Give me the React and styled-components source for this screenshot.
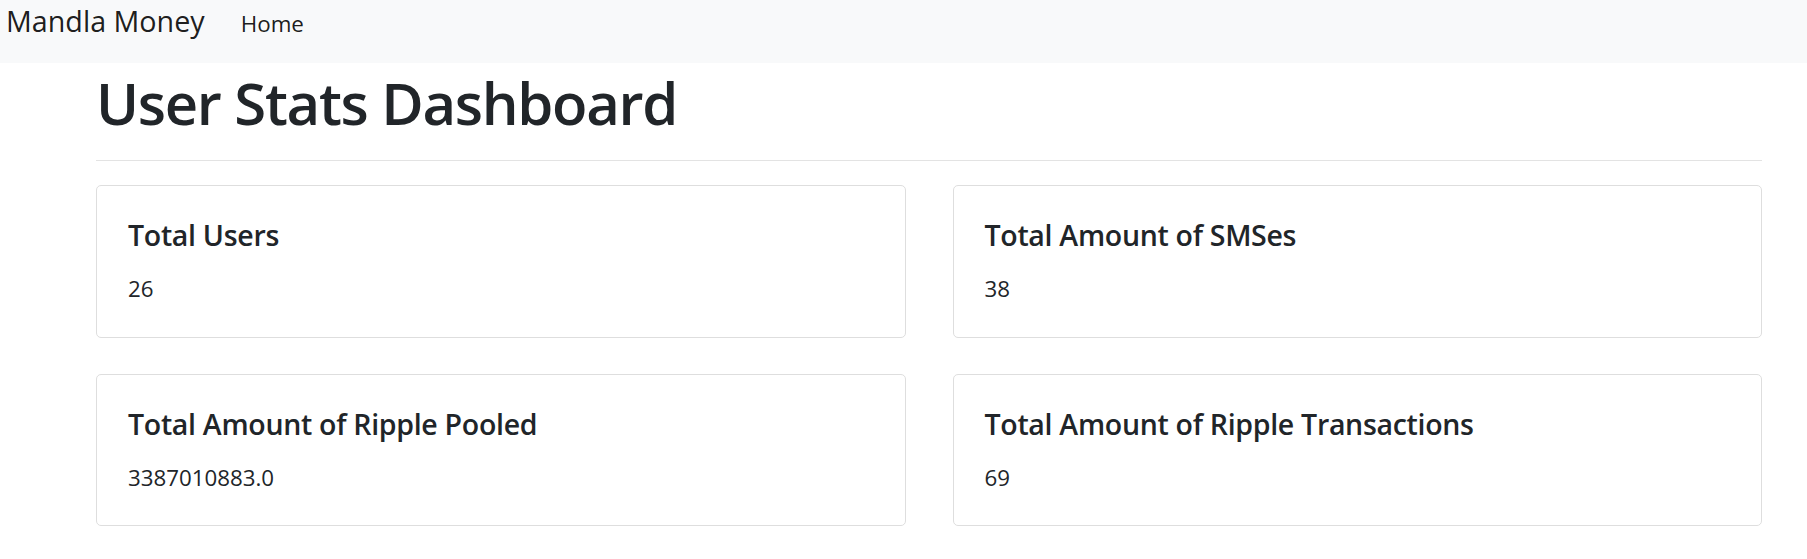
import React from 'react';
import styled, { createGlobalStyle } from 'styled-components';

const GlobalStyle = createGlobalStyle`
    body {
        margin: 0;
        background: #fff;
        color: #212529;
        font-family: "Open Sans", "Noto Sans", sans-serif;
    }
`;

const Nav = styled.nav`
    display: flex;
    align-items: baseline;
    height: 63px;
    padding: 7px 6px 0 6px;
    background-color: #f8f9fa;
    box-sizing: border-box;
`;
const Brand = styled.a`
    font-size: 28.7px;
    color: rgba(0, 0, 0, 0.9);
    text-decoration: none;
    margin-right: 36px;
    line-height: 1;
`;
const NavLink = styled.a`
    font-size: 22.4px;
    color: rgba(0, 0, 0, 0.9);
    text-decoration: none;
    line-height: 1;
`;
const Container = styled.main`
    margin: 0 45px 0 96px;
`;
const Title = styled.h1`
    margin: 5px 0 0 0;
    font-size: 58px;
    font-weight: 600;
    line-height: 1.2;
    letter-spacing: -1.3px;
`;
const Hr = styled.hr`
    margin: 22.5px 0 24px 0;
    border: 0;
    border-top: 1px solid #e3e3e3;
`;
const Grid = styled.div`
    display: grid;
    grid-template-columns: 1fr 1fr;
    column-gap: 47px;
    row-gap: 36px;
`;
const Card = styled.div`
    border: 1px solid #dedede;
    border-radius: 5px;
    padding: 32px 31px 31px 31px;
`;
const CardTitle = styled.h5`
    margin: 0 0 20px 0;
    font-size: 28.5px;
    font-weight: 600;
    line-height: 1.2;
    letter-spacing: -0.3px;
`;
const CardText = styled.p`
    margin: 0;
    font-size: 22.3px;
    line-height: 1.5;
`;

const stats = [
    { label: 'Total Users', value: '26' },
    { label: 'Total Amount of SMSes', value: '38' },
    { label: 'Total Amount of Ripple Pooled', value: '3387010883.0' },
    { label: 'Total Amount of Ripple Transactions', value: '69' },
];

const App = () => (
    <>
        <GlobalStyle />
        <Nav>
            <Brand href="#">Mandla Money</Brand>
            <NavLink href="#">Home</NavLink>
        </Nav>
        <Container>
            <Title>User Stats Dashboard</Title>
            <Hr />
            <Grid>
                {stats.map(s => (
                    <Card key={s.label}>
                        <CardTitle>{s.label}</CardTitle>
                        <CardText>{s.value}</CardText>
                    </Card>
                ))}
            </Grid>
        </Container>
    </>
);

export default App;
